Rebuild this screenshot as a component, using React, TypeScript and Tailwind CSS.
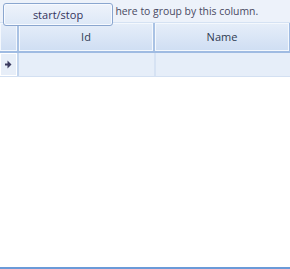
import React from 'react';

export default function App() {
  return (
    <div className="relative w-[290px] h-[269px] bg-white overflow-hidden font-['Open_Sans',sans-serif] text-[11px] text-[#3b3b5c]">
      {/* group panel */}
      <div className="h-[23px] bg-[#edf2fa] border-b border-[#d5e2f3] flex items-center pl-[5px]">
        <span className="text-[10.4px] text-[#4a4a62] leading-none">Drag a column header here to group by this column.</span>
      </div>

      {/* start/stop button, lies over the group panel */}
      <button className="absolute left-[3px] top-[3px] w-[110px] h-[23px] rounded-[3px] border border-[#8aa6cf] bg-gradient-to-b from-[#eef3fb] to-[#dde8f7] text-[#33335c] shadow-[inset_0_0_0_1px_#f7faff] leading-none">
        start/stop
      </button>

      {/* header row */}
      <div className="flex h-[30px] border-b-2 border-[#9fbbe2] bg-gradient-to-b from-[#e6eef9] to-[#cfdef3]">
        <div className="w-[19px] border-r-2 border-[#a9c2e4] shadow-[inset_0_0_0_1px_#f4f8fd]" />
        <div className="flex-1 flex items-center justify-center border-r-2 border-[#a9c2e4] shadow-[inset_0_0_0_1px_#f4f8fd] text-[#2f3b52]">Id</div>
        <div className="flex-1 flex items-center justify-center shadow-[inset_0_0_0_1px_#f4f8fd] border-r border-[#9fbbe2] text-[#2f3b52]">Name</div>
      </div>

      {/* data row */}
      <div className="flex h-[24px] border-b border-[#d3e0f2] bg-[#e6eef9]">
        <div className="w-[19px] flex items-center justify-center border-r-2 border-[#c4d6ee] bg-[#e7eef8] shadow-[inset_0_0_0_1px_#ffffff]">
          <svg width="7" height="9" viewBox="0 0 7 9">
            <path d="M0 3.5 H2.5 V0.5 L6.5 4.5 L2.5 8.5 V5.5 H0 Z" fill="#3a3a5e" />
          </svg>
        </div>
        <div className="flex-1 border-r-2 border-[#d6e2f3] bg-[#e6eef9]" />
        <div className="flex-1 bg-[#e6eef9]" />
      </div>

      {/* bottom edge */}
      <div className="absolute left-0 right-0 bottom-0 h-[2px] bg-[#6b9ad8]" />
    </div>
  );
}
